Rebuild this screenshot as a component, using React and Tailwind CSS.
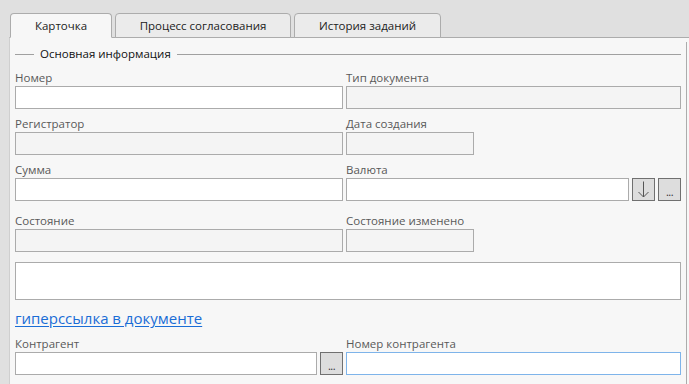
const font = { fontFamily: '"Open Sans", "Noto Sans", sans-serif' };

function Label({ children, className = "" }) {
  return (
    <div className={"h-[17px] leading-[17px] text-[11.5px] text-[#595959] whitespace-nowrap " + className}>
      {children}
    </div>
  );
}

function Box({ disabled, focused, className = "" }) {
  const bg = disabled ? "bg-[#f4f4f4]" : "bg-white";
  const border = focused ? "border-[#7eb4ea]" : "border-[#ababab]";
  return <div className={"h-[23px] border " + bg + " " + border + " " + className} />;
}

function Btn({ children }) {
  return (
    <div className="w-[23px] h-[23px] shrink-0 border border-[#707070] bg-[#dddddd] flex items-center justify-center text-[11px] leading-none text-[#333]">
      {children}
    </div>
  );
}

function Dots() {
  return <span className="mt-[3px] tracking-[-0.5px]">...</span>;
}

function DownArrow() {
  return (
    <svg width="21" height="21" viewBox="0 0 21 21" fill="none" stroke="#555" strokeWidth="1">
      <path d="M10.5 2.5v15.5" />
      <path d="M5.5 13l5 5 5-5" />
    </svg>
  );
}

export default function App() {
  const tabs = [
    { name: "Карточка", w: "w-[102px]", active: true },
    { name: "Процесс согласования", w: "w-[176px]" },
    { name: "История заданий", w: "w-[147px]" },
  ];

  return (
    <div className="w-[689px] h-[384px] bg-[#e0e0e0] overflow-hidden flex flex-col" style={font}>
      <div className="flex gap-[3px] pl-[10px] pt-[13px] relative z-10">
        {tabs.map((t) => (
          <div
            key={t.name}
            className={
              "h-[25px] rounded-t-[4px] border border-[#acacac] flex items-center justify-center text-[11.5px] text-[#222] " +
              t.w +
              (t.active ? " bg-[#f7f7f7] border-b-[#f7f7f7]" : " bg-[#ebebeb]")
            }
          >
            {t.name}
          </div>
        ))}
      </div>

      <div className="-mt-px ml-[9px] flex-1 bg-[#f7f7f7] border-t border-l border-t-[#acacac] border-l-[#cfcfcf] flex">
        <div className="w-[666px] ml-[5px] flex flex-col">
          <div className="mt-[8px] h-[16px] flex items-center">
            <div className="w-[19px] h-px bg-[#a0a0a0]" />
            <div className="px-[6px] text-[11.5px] text-[#111] leading-[16px] whitespace-nowrap">Основная информация</div>
            <div className="flex-1 h-px bg-[#a0a0a0]" />
          </div>

          <div className="flex gap-[3px]">
            <div className="w-[328px] flex flex-col">
              <Label className="mt-[7px]">Номер</Label>
              <Box />
              <Label className="mt-[6px]">Регистратор</Label>
              <Box disabled />
              <Label className="mt-[6px]">Сумма</Label>
              <Box />
              <Label className="mt-[11px]">Состояние</Label>
              <Box disabled />
            </div>
            <div className="flex-1 flex flex-col">
              <Label className="mt-[7px]">Тип документа</Label>
              <Box disabled />
              <Label className="mt-[6px]">Дата создания</Label>
              <Box disabled className="w-[128px]" />
              <Label className="mt-[6px]">Валюта</Label>
              <div className="flex gap-[3px]">
                <Box className="flex-1" />
                <Btn>
                  <DownArrow />
                </Btn>
                <Btn>
                  <Dots />
                </Btn>
              </div>
              <Label className="mt-[11px]">Состояние изменено</Label>
              <Box disabled className="w-[128px]" />
            </div>
          </div>

          <div className="mt-[10px] h-[38px] border border-[#ababab] bg-white" />

          <div className="mt-[8px] h-[20px] leading-[20px] text-[15px] text-[#1a6dd6] underline underline-offset-2">
            гиперссылка в документе
          </div>

          <div className="flex gap-[3px]">
            <div className="w-[328px] flex flex-col">
              <Label className="mt-[7px]">Контрагент</Label>
              <div className="flex gap-[3px]">
                <Box className="flex-1" />
                <Btn>
                  <Dots />
                </Btn>
              </div>
            </div>
            <div className="flex-1 flex flex-col">
              <Label className="mt-[7px]">Номер контрагента</Label>
              <Box focused />
            </div>
          </div>
        </div>
        <div className="ml-[5px] mt-[4px] w-px bg-[#acacac]" />
      </div>
    </div>
  );
}
